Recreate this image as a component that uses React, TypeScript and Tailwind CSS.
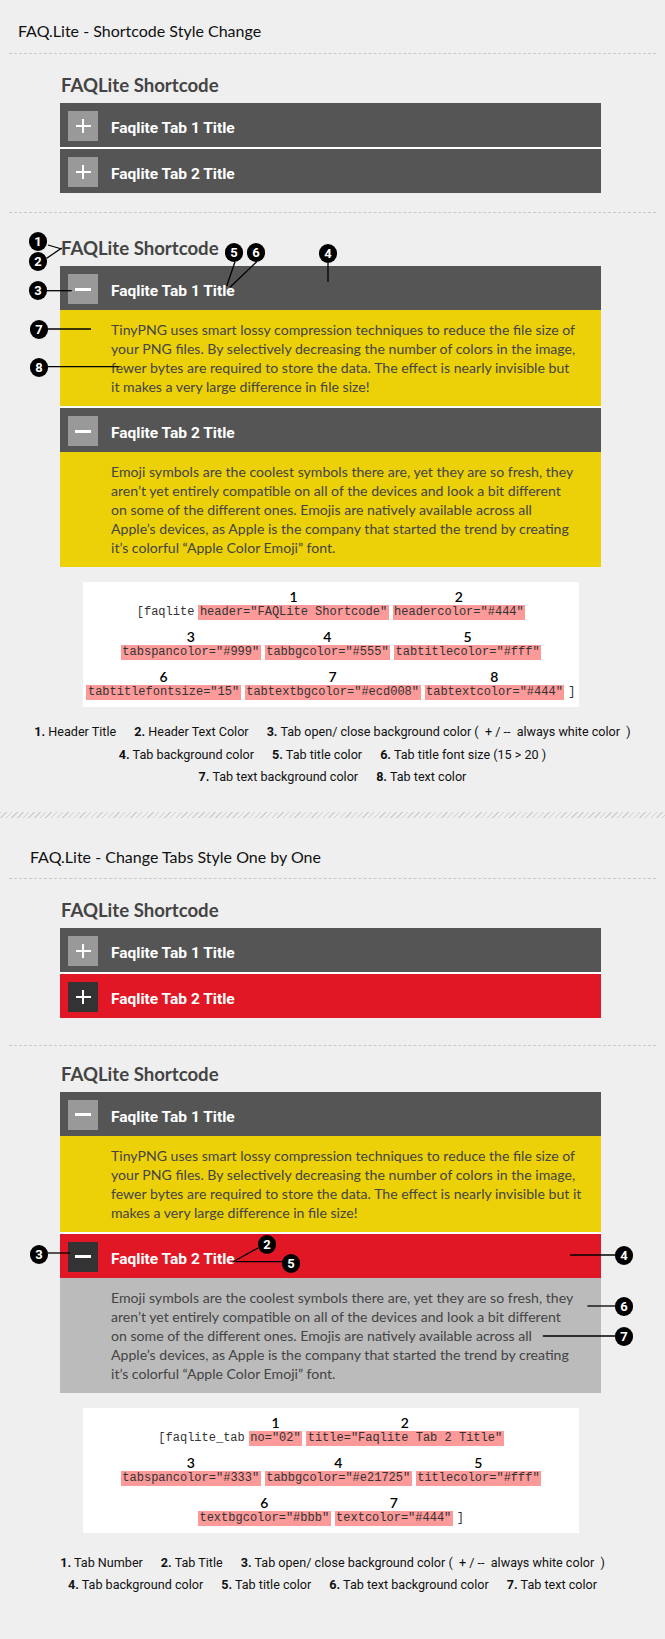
import React from 'react';

type Tab = {
  title: string;
  open?: boolean;
  bar: string;
  span: string;
  body?: string[];
  bodyBg?: string;
};

type Chunk = { n?: string; code: string; plain?: boolean };

const tinyA = [
  'TinyPNG uses smart lossy compression techniques to reduce the file size of',
  'your PNG files. By selectively decreasing the number of colors in the image,',
  'fewer bytes are required to store the data. The effect is nearly invisible but',
  'it makes a very large difference in file size!',
];

const tinyB = [
  'TinyPNG uses smart lossy compression techniques to reduce the file size of',
  'your PNG files. By selectively decreasing the number of colors in the image,',
  'fewer bytes are required to store the data. The effect is nearly invisible but it',
  'makes a very large difference in file size!',
];

const emoji = [
  'Emoji symbols are the coolest symbols there are, yet they are so fresh, they',
  'aren\u2019t yet entirely compatible on all of the devices and look a bit different',
  'on some of the different ones. Emojis are natively available across all',
  'Apple\u2019s devices, as Apple is the company that started the trend by creating',
  'it\u2019s colorful \u201cApple Color Emoji\u201d font.',
];

const marks = [
  { n: '1', cls: 'left-[29px] top-[232px]' },
  { n: '2', cls: 'left-[29px] top-[252px]' },
  { n: '3', cls: 'left-[29px] top-[281px]' },
  { n: '5', cls: 'left-[225px] top-[243px]' },
  { n: '6', cls: 'left-[247px] top-[243px]' },
  { n: '4', cls: 'left-[319px] top-[244px]' },
  { n: '7', cls: 'left-[30px] top-[320px]' },
  { n: '8', cls: 'left-[30px] top-[358px]' },
  { n: '3', cls: 'left-[30px] top-[1245px]' },
  { n: '2', cls: 'left-[258px] top-[1235px]' },
  { n: '5', cls: 'left-[282px] top-[1254px]' },
  { n: '4', cls: 'left-[615px] top-[1246px]' },
  { n: '6', cls: 'left-[615px] top-[1297px]' },
  { n: '7', cls: 'left-[615px] top-[1327px]' },
];

const lines = [
  [48, 245, 61.7, 249],
  [46.7, 258.3, 61.7, 248],
  [46.7, 290.7, 71.7, 290.7],
  [235, 261.7, 226.7, 286],
  [256.7, 261.7, 230, 287.3],
  [328, 263, 328, 281.7],
  [48, 329, 91, 329],
  [48, 366.7, 118.7, 366.7],
  [48, 1253, 70, 1253],
  [258, 1248, 232.4, 1262.3],
  [235.4, 1261.7, 282, 1261.7],
  [570, 1255, 615, 1255],
  [587.4, 1306, 615, 1306],
  [542.8, 1336, 615, 1336],
];

function Plus() {
  return (
    <div className="relative h-[14px] w-[15px]">
      <div className="absolute left-0 top-[6px] h-[2px] w-[15px] bg-white" />
      <div className="absolute left-[6.5px] top-0 h-[14px] w-[2px] bg-white" />
    </div>
  );
}

function Minus() {
  return <div className="h-[3px] w-[16px] bg-white" />;
}

function Accordion({ tabs, className }: { tabs: Tab[]; className: string }) {
  return (
    <div className={`ml-[60px] flex w-[541px] flex-col gap-[2px] bg-white ${className}`}>
      {tabs.map((t) => (
        <div key={t.title}>
          <div className={`flex h-[44px] items-start ${t.bar}`}>
            <div className={`ml-[8px] mt-[8px] flex h-[30px] w-[30px] items-center justify-center ${t.span}`}>
              {t.open ? <Minus /> : <Plus />}
            </div>
            <span className="ml-[13px] mt-[16px] font-['Roboto',sans-serif] text-[15.5px] font-bold leading-[18px] text-white">
              {t.title}
            </span>
          </div>
          {t.open && t.body && (
            <div className={`py-[10px] pl-[51px] text-[14.1px] leading-[19px] text-[#444] ${t.bodyBg}`}>
              {t.body.map((l) => (
                <div key={l} className="whitespace-nowrap">
                  {l}
                </div>
              ))}
            </div>
          )}
        </div>
      ))}
    </div>
  );
}

function Heading({ className }: { className: string }) {
  return (
    <h2 className={`ml-[61px] text-[18.6px] font-bold leading-[22px] text-[#444] ${className}`}>FAQLite Shortcode</h2>
  );
}

function Dashed({ className }: { className: string }) {
  return <div className={`mx-[9px] border-t border-dashed border-[#c9c9c9] ${className}`} />;
}

function CodeBox({ rows, className }: { rows: Chunk[][]; className: string }) {
  return (
    <div className={`ml-[83px] flex h-[125px] w-[496px] flex-col gap-[10px] bg-white pt-[8px] ${className}`}>
      {rows.map((row, i) => (
        <div key={i} className="flex items-end justify-center gap-[4px]">
          {row.map((c) => (
            <div key={c.code} className="flex flex-col items-center">
              <span className="h-[14px] text-[14px] font-semibold leading-[14px] text-black">{c.n}</span>
              <span
                className={`mt-[1px] h-[15px] whitespace-pre font-['Liberation_Mono',monospace] text-[12px] leading-[15px] text-[#333] ${
                  c.plain ? '' : 'bg-[#fc9a9a] px-[1.5px]'
                }`}
              >
                {c.code}
              </span>
            </div>
          ))}
        </div>
      ))}
    </div>
  );
}

function Legend({ rows, className }: { rows: [string, string][][]; className: string }) {
  return (
    <div className={`flex flex-col font-['Roboto',sans-serif] text-[12.6px] leading-[22.5px] text-[#111] ${className}`}>
      {rows.map((row, i) => (
        <div key={i} className="flex justify-center gap-[18px] whitespace-pre">
          {row.map(([n, label]) => (
            <span key={n}>
              <b className="font-bold">{n}</b> {label}
            </span>
          ))}
        </div>
      ))}
    </div>
  );
}

export default function App() {
  return (
    <div className="relative min-h-[1639px] overflow-hidden bg-[#efefef] font-['Lato',sans-serif]">
      {/* Shortcode style change */}
      <div className="pl-[18px] pt-[21px] text-[16px] leading-[20px] text-[#111]">FAQ.Lite - Shortcode Style Change</div>
      <Dashed className="mt-[12px]" />
      <Heading className="mt-[20px]" />
      <Accordion
        className="mt-[7px]"
        tabs={[
          { title: 'Faqlite Tab 1 Title', bar: 'bg-[#555]', span: 'bg-[#999]' },
          { title: 'Faqlite Tab 2 Title', bar: 'bg-[#555]', span: 'bg-[#999]' },
        ]}
      />
      <Dashed className="mt-[19px]" />
      <Heading className="mt-[24px]" />
      <Accordion
        className="mt-[7px]"
        tabs={[
          { title: 'Faqlite Tab 1 Title', open: true, bar: 'bg-[#555]', span: 'bg-[#999]', body: tinyA, bodyBg: 'bg-[#ecd008]' },
          { title: 'Faqlite Tab 2 Title', open: true, bar: 'bg-[#555]', span: 'bg-[#999]', body: emoji, bodyBg: 'bg-[#ecd008]' },
        ]}
      />
      <CodeBox
        className="mt-[15px]"
        rows={[
          [
            { code: '[faqlite', plain: true },
            { n: '1', code: 'header="FAQLite Shortcode"' },
            { n: '2', code: 'headercolor="#444"' },
          ],
          [
            { n: '3', code: 'tabspancolor="#999"' },
            { n: '4', code: 'tabbgcolor="#555"' },
            { n: '5', code: 'tabtitlecolor="#fff"' },
          ],
          [
            { n: '6', code: 'tabtitlefontsize="15"' },
            { n: '7', code: 'tabtextbgcolor="#ecd008"' },
            { n: '8', code: 'tabtextcolor="#444"' },
            { code: ']', plain: true },
          ],
        ]}
      />
      <Legend
        className="mt-[14px]"
        rows={[
          [
            ['1.', 'Header Title'],
            ['2.', 'Header Text Color'],
            ['3.', 'Tab open/ close background color (  + / --  always white color  )'],
          ],
          [
            ['4.', 'Tab background color'],
            ['5.', 'Tab title color'],
            ['6.', 'Tab title font size (15 > 20 )'],
          ],
          [
            ['7.', 'Tab text background color'],
            ['8.', 'Tab text color'],
          ],
        ]}
      />
      <div className="mt-[23px] h-[6px] bg-[repeating-linear-gradient(135deg,#cfcfcf_0px,#cfcfcf_1px,transparent_1px,transparent_4px)]" />

      {/* Change tabs one by one */}
      <div className="mt-[29px] pl-[30px] text-[16px] leading-[20px] text-[#111]">FAQ.Lite - Change Tabs Style One by One</div>
      <Dashed className="mt-[11px]" />
      <Heading className="mt-[20px]" />
      <Accordion
        className="mt-[7px]"
        tabs={[
          { title: 'Faqlite Tab 1 Title', bar: 'bg-[#555]', span: 'bg-[#999]' },
          { title: 'Faqlite Tab 2 Title', bar: 'bg-[#e21725]', span: 'bg-[#333]' },
        ]}
      />
      <Dashed className="mt-[27px]" />
      <Heading className="mt-[17px]" />
      <Accordion
        className="mt-[7px]"
        tabs={[
          { title: 'Faqlite Tab 1 Title', open: true, bar: 'bg-[#555]', span: 'bg-[#999]', body: tinyB, bodyBg: 'bg-[#ecd008]' },
          { title: 'Faqlite Tab 2 Title', open: true, bar: 'bg-[#e21725]', span: 'bg-[#333]', body: emoji, bodyBg: 'bg-[#bbb]' },
        ]}
      />
      <CodeBox
        className="mt-[15px]"
        rows={[
          [
            { code: '[faqlite_tab', plain: true },
            { n: '1', code: 'no="02"' },
            { n: '2', code: 'title="Faqlite Tab 2 Title"' },
          ],
          [
            { n: '3', code: 'tabspancolor="#333"' },
            { n: '4', code: 'tabbgcolor="#e21725"' },
            { n: '5', code: 'titlecolor="#fff"' },
          ],
          [
            { n: '6', code: 'textbgcolor="#bbb"' },
            { n: '7', code: 'textcolor="#444"' },
            { code: ']', plain: true },
          ],
        ]}
      />
      <Legend
        className="mt-[19px]"
        rows={[
          [
            ['1.', 'Tab Number'],
            ['2.', 'Tab Title'],
            ['3.', 'Tab open/ close background color (  + / --  always white color  )'],
          ],
          [
            ['4.', 'Tab background color'],
            ['5.', 'Tab title color'],
            ['6.', 'Tab text background color'],
            ['7.', 'Tab text color'],
          ],
        ]}
      />

      {/* annotation overlay */}
      <svg className="pointer-events-none absolute left-0 top-0 h-[1639px] w-[665px]" viewBox="0 0 665 1639">
        {lines.map(([x1, y1, x2, y2], i) => (
          <line key={i} x1={x1} y1={y1} x2={x2} y2={y2} stroke="#000" strokeWidth={1.3} />
        ))}
      </svg>
      {marks.map((m, i) => (
        <div
          key={i}
          className={`absolute flex h-[19px] w-[18px] items-center justify-center rounded-full bg-black font-['Roboto',sans-serif] text-[13px] font-bold leading-none text-white ${m.cls}`}
        >
          {m.n}
        </div>
      ))}
    </div>
  );
}
